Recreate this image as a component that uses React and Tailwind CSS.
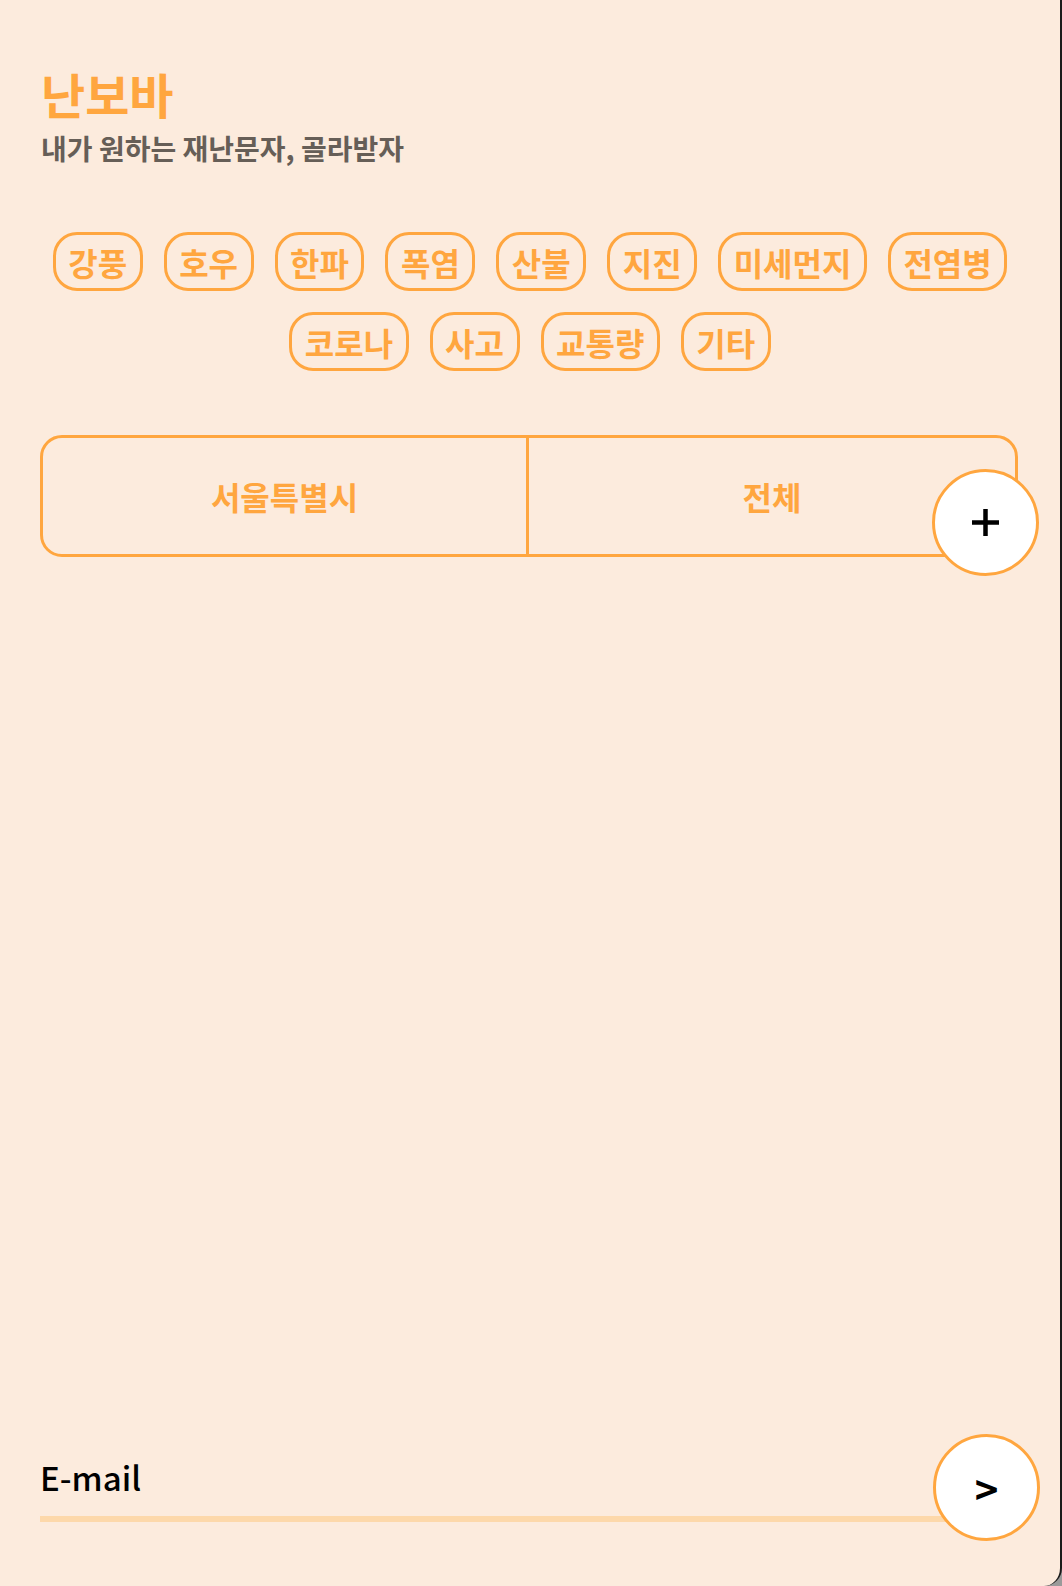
import { useState } from 'react'

const CATEGORIES = [
  '강풍', '호우', '한파', '폭염', '산불', '지진', '미세먼지', '전염병',
  '코로나', '사고', '교통량', '기타',
]

const FONT = { fontFamily: '"Noto Sans CJK KR","Noto Sans",sans-serif' }

function Chip({ label }) {
  return (
    <button className="h-[59px] px-[12.5px] flex items-center rounded-[24px] border-[3px] border-[#ffa63f] text-[#ffa63f] text-[32px] leading-none font-semibold">
      {label}
    </button>
  )
}

export default function App() {
  const [email, setEmail] = useState('')

  return (
    <div className="w-[1062px] h-[1586px] bg-[#9a9a9a]" style={FONT}>
      <div className="relative w-[1062px] h-[1586px] bg-[#fcebdd] border-r-2 border-[#1a1a1a] rounded-br-[18px] flex flex-col">

        {/* Header */}
        <div className="pl-[41px] pt-[69px]">
          <h1 className="text-[48px] leading-[48px] font-bold text-[#ffa63f]">난보바</h1>
          <p className="mt-[17px] text-[28px] leading-[28px] font-semibold text-[#665e57]">
            내가 원하는 재난문자, 골라받자
          </p>
        </div>

        {/* Category chips */}
        <div className="mt-[70px] flex flex-wrap justify-center gap-[21px]">
          {CATEGORIES.map(c => <Chip key={c} label={c} />)}
        </div>

        {/* Region selector */}
        <div className="relative mt-[64px] ml-[40px] w-[978px] h-[122px] grid grid-cols-2 rounded-[22px] border-[3px] border-[#ffa63f]">
          <div className="flex items-center justify-center border-r-[3px] border-[#ffa63f] text-[32px] font-bold text-[#ffa63f]">
            서울특별시
          </div>
          <div className="flex items-center justify-center text-[32px] font-bold text-[#ffa63f]">
            전체
          </div>
          <button className="absolute -right-[24px] top-[31px] w-[107px] h-[107px] rounded-full bg-white border-[3px] border-[#ffa63f] flex items-center justify-center">
            <svg width="27" height="27" viewBox="0 0 27 27">
              <path d="M13.5 0v27M0 13.5h27" stroke="#000" strokeWidth="4.5" />
            </svg>
          </button>
        </div>

        <div className="flex-1" />

        {/* E-mail */}
        <div className="relative ml-[40px] w-[930px] pb-[64px]">
          <input
            value={email}
            onChange={e => setEmail(e.target.value)}
            placeholder="E-mail"
            className="block w-full bg-transparent outline-none text-[33px] leading-[34px] font-medium text-black placeholder:text-black"
            style={FONT}
          />
          <div className="mt-[22px] h-[6px] bg-[#fdd8aa]" />
          <button className="absolute -right-[70px] -top-[26px] w-[107px] h-[107px] rounded-full bg-white border-[3px] border-[#ffa63f] flex items-center justify-center text-[40px] font-bold text-black">
            &gt;
          </button>
        </div>
      </div>
    </div>
  )
}
